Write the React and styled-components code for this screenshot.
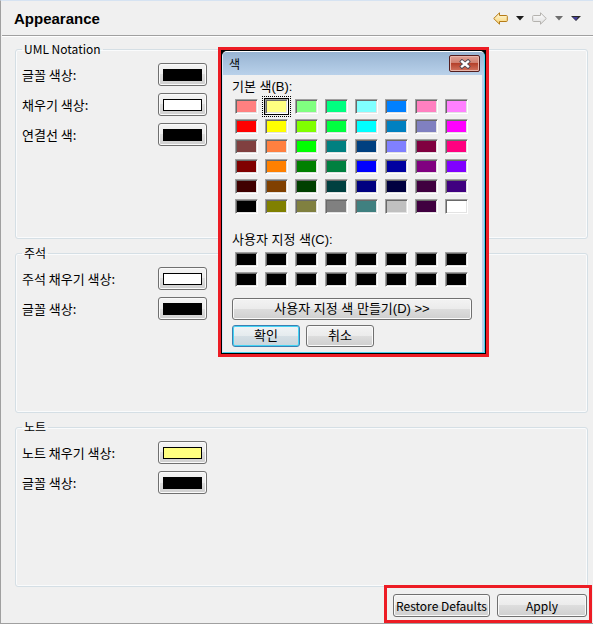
import React, { useState } from "react";
import styled, { createGlobalStyle, css } from "styled-components";

const GlobalStyle = createGlobalStyle`
  * { box-sizing: border-box; }
  body {
    margin: 0;
    background: #f0f0f0;
    color: #000;
    font: 13px/16px "Noto Sans CJK KR", sans-serif;
  }
  button { font: inherit; color: inherit; margin: 0; padding: 0; }
`;

const Page = styled.main`
  position: relative;
  display: flex;
  flex-direction: column;
  min-height: 100vh;
  border-top: 1px solid #d6e3f2;
  border-left: 1px solid #a0a0a0;
  border-bottom: 1px solid #a0a0a0;
`;

const Header = styled.header`
  display: flex;
  align-items: center;
  justify-content: space-between;
  height: 36px;
  margin-left: 1px;
  padding: 0 12px;
  border-bottom: 1px solid #fff;
  box-shadow: inset 0 -1px #a0a0a0;
`;

const Title = styled.h1`
  margin: 0;
  font: bold 15px/18px "Liberation Sans", sans-serif;
`;

const Nav = styled.nav`
  display: flex;
  align-items: center;
  gap: 8px;
`;

const NavButton = styled.button`
  display: flex;
  border: 0;
  background: none;
`;

const Groups = styled.div`
  flex: 1;
  display: flex;
  flex-direction: column;
  gap: 6px;
  padding: 4px 5px 0 14px;
`;

const Group = styled.fieldset`
  flex: 1 1 auto;
  min-width: 0;
  margin: 0;
  padding: 6px 6px 5px;
  border: 1px solid #d5dfe5;
  border-radius: 3px;
  box-shadow: inset 0 0 0 1px #fafbfc;
`;

const Legend = styled.legend`
  padding: 0 2px;
  font-size: 12px;
`;

const Row = styled.div`
  display: grid;
  grid-template-columns: 136px 49px;
  align-items: center;
  height: 23px;
  & + & { margin-top: 7px; }
`;

const buttonFace = css`
  border: 1px solid #707070;
  border-radius: 3px;
  background: linear-gradient(#f3f3f3, #ebebeb 50%, #dddddd 50%, #cfcfcf);
  box-shadow: inset 0 0 0 1px #fafafa;
`;

const ColorButton = styled.button`
  ${buttonFace}
  display: grid;
  place-items: center;
  height: 23px;
`;

const ColorChip = styled.span`
  width: 39px;
  height: 12px;
  border: 1px solid #000;
  background: ${(p) => p.$color};
`;

const PushButton = styled.button`
  ${buttonFace}
  width: ${(p) => p.$width};
  height: ${(p) => p.$height || "22px"};
  white-space: nowrap;
  ${(p) =>
    p.$primary &&
    css`
      border-color: #3c7fb1;
      background: linear-gradient(#f0f4f6, #e5ebee 50%, #d5dfe5 50%, #c9d5dc);
      box-shadow: inset 0 0 0 1px #43d3f4;
    `}
`;

const Footer = styled.footer`
  align-self: flex-end;
  display: flex;
  gap: 7px;
  margin: -2px 1px 0 0;
  padding: 6px 2px 3px 6px;
  border: 3px solid #ed1c24;
  font-size: 12px;
`;

const Dialog = styled.section`
  position: absolute;
  top: 46px;
  left: 217px;
  width: 271px;
  border: 3px solid #ed1c24;
  background: #000;
  font-family: "Liberation Sans", "Noto Sans CJK KR", sans-serif;
`;

const DialogFrame = styled.div`
  margin: 1px;
  border: 1px solid #45d3ee;
  border-left-color: #d5e8f8;
  border-top-color: #fff;
  border-radius: 5px 5px 0 0;
  background: #b9d1ea;
`;

const TitleBar = styled.header`
  display: flex;
  align-items: center;
  justify-content: space-between;
  height: 23px;
  padding: 0 4px 0 6px;
  border-radius: 4px 4px 0 0;
  background: linear-gradient(#98b4d2, #b9d1ea);
`;

const DialogTitle = styled.h2`
  margin: 0;
  font: 12px/16px "Noto Sans CJK KR", sans-serif;
`;

const CloseButton = styled.button`
  display: grid;
  place-items: center;
  width: 31px;
  height: 17px;
  border: 1px solid #531e1e;
  border-radius: 2px;
  background: linear-gradient(#e0a195, #cf7d6d 48%, #b5412b 50%, #d27460);
  box-shadow: inset 0 0 0 1px #e8b5aa;
`;

const DialogBody = styled.div`
  margin-right: 2px;
  padding: 4px 9px 5px;
  background: #f0f0f0;
`;

const SectionLabel = styled.h3`
  margin: 0 0 4px;
  font: inherit;
`;

const Palette = styled.div`
  display: grid;
  grid-template-columns: repeat(8, 23px);
  gap: 5px 7px;
  margin: 0 0 ${(p) => p.$after} 3px;
`;

const Swatch = styled.button`
  height: 15px;
  border: 1px solid;
  border-color: #a0a0a0 #fff #fff #a0a0a0;
  background: ${(p) => p.$color};
  box-shadow: inset 1px 1px #696969, inset -1px -1px #e3e3e3;
  ${(p) =>
    p.$selected &&
    css`
      outline: 1px dotted #000;
      outline-offset: 2px;
      box-shadow: 0 0 0 1px #000, inset 1px 1px #696969, inset -1px -1px #e3e3e3;
    `}
`;

const Actions = styled.div`
  display: flex;
  gap: 6px;
  margin-top: 5px;
`;

const GROUPS = [
  { name: "UML Notation", rows: [["글꼴 색상:", "#000"], ["채우기 색상:", "#fff"], ["연결선 색:", "#000"]] },
  { name: "주석", rows: [["주석 채우기 색상:", "#fff"], ["글꼴 색상:", "#000"]] },
  { name: "노트", rows: [["노트 채우기 색상:", "#ffff80"], ["글꼴 색상:", "#000"]] },
];

const BASIC_COLORS = `
  ff8080 ffff80 80ff80 00ff80 80ffff 0080ff ff80c0 ff80ff
  ff0000 ffff00 80ff00 00ff40 00ffff 0080c0 8080c0 ff00ff
  804040 ff8040 00ff00 008080 004080 8080ff 800040 ff0080
  800000 ff8000 008000 008040 0000ff 0000a0 800080 8000ff
  400000 804000 004000 004040 000080 000040 400040 400080
  000000 808000 808040 808080 408080 c0c0c0 400040 ffffff
`.trim().split(/\s+/).map((c) => "#" + c);

const CUSTOM_COLORS = Array(16).fill("#000000");

const Arrow = ({ forward }) => (
  <svg width="15" height="13" viewBox="0 0 15 13" aria-hidden="true">
    <defs>
      <linearGradient id={forward ? "fwd" : "back"} x2="0" y2="1">
        <stop offset="0" stopColor={forward ? "#ffffff" : "#fffbe0"} />
        <stop offset="1" stopColor={forward ? "#dedede" : "#f8d272"} />
      </linearGradient>
    </defs>
    <path
      d="M.7 6.5 6.5.8V3.5H13.5q.8 0 .8.8v4.4q0 .8-.8.8H6.5v2.7Z"
      transform={forward ? "matrix(-1 0 0 1 15 0)" : undefined}
      fill={forward ? "url(#fwd)" : "url(#back)"}
      stroke={forward ? "#b4b2ae" : "#b57b17"}
    />
  </svg>
);

const Caret = ({ color, large }) => (
  <svg width={large ? 10 : 8} height="5" viewBox={large ? "0 0 10 5" : "0 0 8 5"} aria-hidden="true">
    {large ? (
      <>
        <path d="M0 0H10L5 5Z" fill="#2a2a2a" />
        <path d="M1.500 1H7L5 4.500Z" fill="#45409a" />
      </>
    ) : (
      <path d="M0 0H8L4 4.5Z" fill={color} />
    )}
  </svg>
);

const ColorGroup = ({ name, rows }) => (
  <Group>
    <Legend>{name}</Legend>
    {rows.map(([label, color], i) => (
      <Row key={label}>
        <label htmlFor={`${name}-${i}`}>{label}</label>
        <ColorButton id={`${name}-${i}`} type="button">
          <ColorChip $color={color} />
        </ColorButton>
      </Row>
    ))}
  </Group>
);

function ColorDialog() {
  const [selected, setSelected] = useState(1);
  return (
    <Dialog role="dialog" aria-labelledby="color-title">
      <DialogFrame>
        <TitleBar>
          <DialogTitle id="color-title">색</DialogTitle>
          <CloseButton type="button" aria-label="닫기">
            <svg width="12" height="10" viewBox="0 0 12 10" aria-hidden="true">
              <path d="M3 2.500 9 7.500M9 2.500 3 7.500" stroke="#4d4650" strokeWidth="4" strokeLinecap="square" />
              <path d="M3 2.500 9 7.500M9 2.500 3 7.500" stroke="#fff" strokeWidth="2.3" strokeLinecap="square" />
            </svg>
          </CloseButton>
        </TitleBar>
        <DialogBody>
          <SectionLabel>기본 색(B):</SectionLabel>
          <Palette $after="18px">
            {BASIC_COLORS.map((color, i) => (
              <Swatch
                key={i}
                type="button"
                aria-label={color}
                $color={color}
                $selected={i === selected}
                onClick={() => setSelected(i)}
              />
            ))}
          </Palette>
          <SectionLabel>사용자 지정 색(C):</SectionLabel>
          <Palette $after="11px">
            {CUSTOM_COLORS.map((color, i) => (
              <Swatch key={i} type="button" aria-label={color} $color={color} />
            ))}
          </Palette>
          <PushButton type="button" $width="240px">사용자 지정 색 만들기(D) &gt;&gt;</PushButton>
          <Actions>
            <PushButton type="button" $width="68px" $primary>확인</PushButton>
            <PushButton type="button" $width="68px">취소</PushButton>
          </Actions>
        </DialogBody>
      </DialogFrame>
    </Dialog>
  );
}

export default function App() {
  return (
    <>
      <GlobalStyle />
      <Page>
        <Header>
          <Title>Appearance</Title>
          <Nav>
            <NavButton type="button" aria-label="Back"><Arrow /></NavButton>
            <NavButton type="button" aria-label="Back history"><Caret color="#1c1c1c" /></NavButton>
            <NavButton type="button" aria-label="Forward"><Arrow forward /></NavButton>
            <NavButton type="button" aria-label="Forward history"><Caret color="#6e6e6e" /></NavButton>
            <NavButton type="button" aria-label="Menu"><Caret large /></NavButton>
          </Nav>
        </Header>
        <Groups>
          {GROUPS.map((group) => <ColorGroup key={group.name} {...group} />)}
        </Groups>
        <Footer>
          <PushButton type="button" $width="97px" $height="23px">Restore Defaults</PushButton>
          <PushButton type="button" $width="90px" $height="23px">Apply</PushButton>
        </Footer>
        <ColorDialog />
      </Page>
    </>
  );
}
